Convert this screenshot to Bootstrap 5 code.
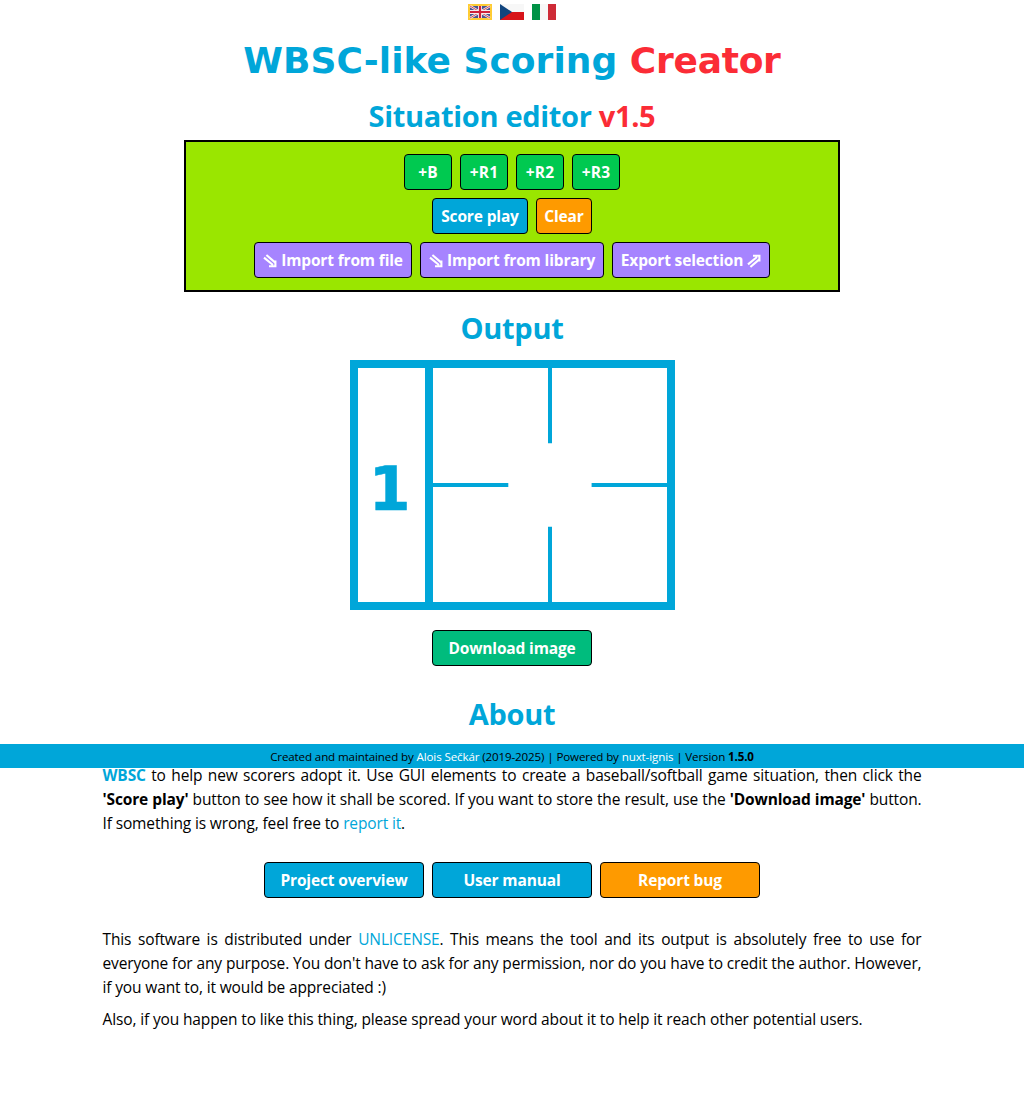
<!DOCTYPE html>
<html lang="en">
<head>
<meta charset="utf-8">
<title>WBSC-like Scoring Creator</title>
<meta name="viewport" content="width=device-width, initial-scale=1">
<link href="https://cdn.jsdelivr.net/npm/bootstrap@5.3.0/dist/css/bootstrap.min.css" rel="stylesheet">
<style>
:root{--brand:#00a6d9;--accent:#fb2c36}
body{font-family:"Open Sans","Noto Sans",sans-serif;font-size:15.5px;line-height:24px;letter-spacing:-.137px;color:#000;background:#fff}
a{color:var(--brand);text-decoration:none}
.flags{height:24px;gap:8px;padding-top:4px}
.flags svg{width:24px;height:16px;display:block}
.page-title{font:bold 36px/40px "DejaVu Sans",Verdana,sans-serif;letter-spacing:.03px;color:var(--brand);margin:17px 0 15px}
.page-title .accent{letter-spacing:-.25px}
.section-title{font-size:29px;line-height:39px;font-weight:700;letter-spacing:-.32px;color:var(--brand);margin:0 0 -3px}
.about-title{margin:28px 0 11px}
.accent{color:var(--accent)}
.editor{width:656px;height:152px;border:2px solid #000;background:#9ae600;gap:8px;padding:12px 0;margin:8px 0 16px}
.tool{height:36px;padding:0 0 1px;border:1px solid #000;border-radius:4px;color:#fff;font-weight:750;font-size:15.5px;line-height:24px;letter-spacing:-.15px;display:inline-flex;align-items:center;justify-content:center;white-space:nowrap}
.tool svg{width:14px;height:14px;flex:none;margin-top:2px}
.w-s{width:48px;letter-spacing:.1px}.w-clear{width:56px}.w-play{width:96px}.w-io{width:158px}.w-lib{width:184px}.w-l{width:160px}
.c-green{background:#00c950}.c-blue{background:var(--brand)}.c-orange{background:#fe9a00}.c-purple{background:#a684ff}.c-teal{background:#00bc7d}
.diagram{display:block;width:325px;height:250px;margin:16px 0 20px 1px}
.site-footer{position:relative;z-index:1;height:24px;line-height:26px;margin:0 0 -6px;background:var(--brand);font-size:11.6px;letter-spacing:-.13px;width:100%;text-align:center}
.site-footer a{color:#fff}
.copy{width:819px;padding-top:1px;margin-bottom:-1px}
.copy p{margin:0 0 8px}
.copy .full{display:block;text-align:justify;text-align-last:justify}
.copy .tight{word-spacing:-1px}
.links{margin:20px 0 28px}
</style>
</head>
<body>
<div class="d-flex flex-column align-items-center">
  <nav class="flags d-flex">
    <a href="#"><svg viewBox="0 0 24 16"><path fill="#fc3" d="M0 0h24v16H0z"/><path fill="#4a5590" d="M2 2h20v12H2z"/><path stroke="#eee" stroke-width="2.4" d="m2 2 20 12M22 2 2 14"/><path stroke="#d33b4b" stroke-width=".9" d="m2 2 20 12M22 2 2 14"/><path stroke="#f4eef0" stroke-width="4" d="M12 2v12M2 8h20"/><path stroke="#d0203a" stroke-width="2.2" d="M12 2v12M2 8h20"/></svg></a>
    <a href="#"><svg viewBox="0 0 24 16"><path fill="#f7f7f7" d="M0 0h24v8H0z"/><path fill="#d7141a" d="M0 8h24v8H0z"/><path fill="#11457e" d="m0 0 12 8-12 8z"/></svg></a>
    <a href="#"><svg viewBox="0 0 24 16"><path fill="#f7f7f7" d="M0 0h24v16H0z"/><path fill="#009246" d="M0 0h8v16H0z"/><path fill="#ce2b37" d="M16 0h8v16h-8z"/></svg></a>
  </nav>
  <h1 class="page-title">WBSC-like Scoring <span class="accent">Creator</span></h1>
  <h2 class="section-title">Situation editor <span class="accent">v1.5</span></h2>

  <section class="editor d-flex flex-column align-items-center">
    <div class="d-flex gap-2">
      <button class="btn tool w-s c-green">+B</button>
      <button class="btn tool w-s c-green">+R1</button>
      <button class="btn tool w-s c-green">+R2</button>
      <button class="btn tool w-s c-green">+R3</button>
    </div>
    <div class="d-flex gap-2">
      <button class="btn tool w-play c-blue">Score play</button>
      <button class="btn tool w-clear c-orange">Clear</button>
    </div>
    <div class="d-flex gap-2">
      <button class="btn tool w-io c-purple"><svg class="me-1" viewBox="0 0 14 14" fill="none" stroke="#fff" stroke-width="2.1"><path d="m1 3.6 9 7.4M3.4 1l8.6 7.4M6 12.2h6.4V6.5"/></svg>Import from file</button>
      <button class="btn tool w-lib c-purple"><svg class="me-1" viewBox="0 0 14 14" fill="none" stroke="#fff" stroke-width="2.1"><path d="m1 3.6 9 7.4M3.4 1l8.6 7.4M6 12.2h6.4V6.5"/></svg>Import from library</button>
      <button class="btn tool w-io c-purple">Export selection<svg class="ms-1" viewBox="0 0 14 14" fill="none" stroke="#fff" stroke-width="2.1"><path d="m1 10.4 9-7.4M3.4 13 12 5.6M6 1.8h6.4v5.7"/></svg></button>
    </div>
  </section>

  <h2 class="section-title">Output</h2>
  <svg class="diagram" viewBox="0 0 325 250">
    <rect x="4" y="4" width="317" height="242" fill="#fff" stroke="#00a6d9" stroke-width="8"/>
    <path d="M79 4v242" stroke="#00a6d9" stroke-width="8"/>
    <path d="M200 8v75.3M200 166.7V242M83 125h75.3M241.6 125H317" stroke="#00a6d9" stroke-width="4"/>
    <text x="39.5" y="150" text-anchor="middle" fill="#00a6d9" stroke="#00a6d9" stroke-width=".6" font-family="DejaVu Sans, Verdana, sans-serif" font-weight="700" font-size="60" letter-spacing="0">1</text>
  </svg>
  <button class="btn tool w-l c-teal">Download image</button>

  <h2 class="section-title about-title">About</h2>
  <footer class="site-footer">Created and maintained by <a href="#">Alois Sečkár</a> (2019-2025) | Powered by <a href="#">nuxt-ignis</a> | Version <b>1.5.0</b></footer>

  <div class="copy">
    <p><span class="full"><a href="#"><b>WBSC</b></a> to help new scorers adopt it. Use GUI elements to create a baseball/softball game situation, then click the</span>
    <span class="full"><b>'Score play'</b> button to see how it shall be scored. If you want to store the result, use the <b>'Download image'</b> button.</span>
    If something is wrong, feel free to <a href="#">report it</a>.</p>
  </div>
  <div class="links d-flex gap-2">
    <a href="#" class="btn tool w-l c-blue">Project overview</a>
    <a href="#" class="btn tool w-l c-blue">User manual</a>
    <a href="#" class="btn tool w-l c-orange">Report bug</a>
  </div>
  <div class="copy">
    <p><span class="full">This software is distributed under <a href="#">UNLICENSE</a>. This means the tool and its output is absolutely free to use for</span>
    <span class="full tight">everyone for any purpose. You don't have to ask for any permission, nor do you have to credit the author. However,</span>
    if you want to, it would be appreciated :)</p>
    <p>Also, if you happen to like this thing, please spread your word about it to help it reach other potential users.</p>
  </div>
</div>
<script src="https://cdn.jsdelivr.net/npm/bootstrap@5.3.0/dist/js/bootstrap.bundle.min.js"></script>
</body>
</html>
